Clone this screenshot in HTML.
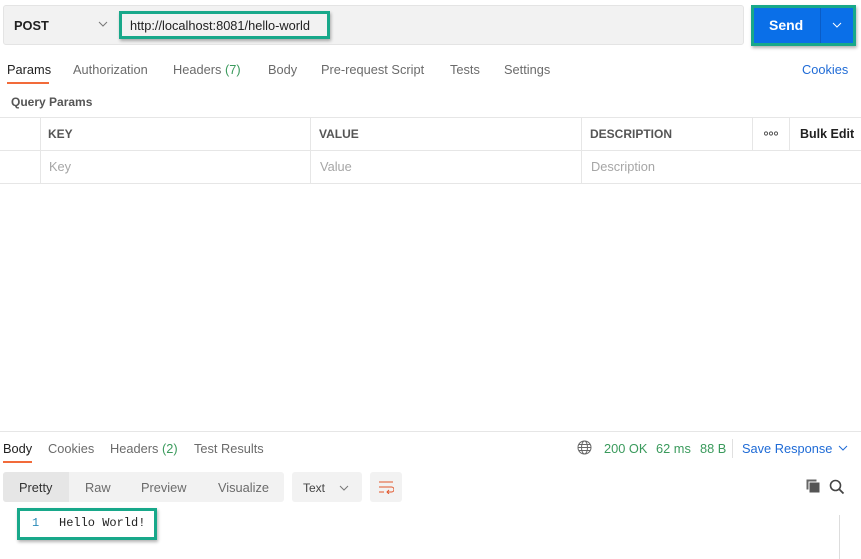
<!DOCTYPE html>
<html><head><meta charset="utf-8"><style>
*{box-sizing:border-box;margin:0;padding:0}
body{width:861px;height:559px;background:#fff;font-family:"Liberation Sans",Arial,sans-serif;font-size:12.8px;color:#212121;position:relative;overflow:hidden}
.a{position:absolute;white-space:nowrap}
.tab{color:#6b6b6b;font-size:12.8px}
.cell{position:absolute;border-left:1px solid #e6e6e6}
</style></head><body>
<div class="a" style="left:3px;top:5px;width:741px;height:40px;background:#f2f2f2;border:1px solid #e4e4e4;border-radius:3px"></div>
<div class="a" style="left:14px;top:18px;font-weight:bold;font-size:12.8px">POST</div>
<svg class="a" style="left:98px;top:21px" width="10" height="6"><path d="M1 1L5 5L9 1" stroke="#777" fill="none"/></svg>
<div class="a" style="left:119px;top:11px;width:211px;height:28px;border:3px solid #18a88a;box-shadow:1px 2px 3px rgba(0,0,0,.3)"></div>
<div class="a" style="left:130px;top:18px;font-size:12.8px">http://localhost:8081/hello-world</div>
<div class="a" style="left:751px;top:5px;width:105px;height:41px;background:#18a88a;box-shadow:1px 2px 3px rgba(0,0,0,.3)"></div>
<div class="a" style="left:754px;top:8px;width:99px;height:35px;background:#0a6fe8"></div>
<div class="a" style="left:820px;top:8px;width:1px;height:35px;background:#0a5cc6"></div>
<div class="a" style="left:769px;top:17px;color:#fff;font-weight:bold;font-size:14px">Send</div>
<svg class="a" style="left:832px;top:22px" width="10" height="6"><path d="M1 1L5 5L9 1" stroke="#fff" fill="none"/></svg>

<div class="a" style="left:7px;top:62px;color:#212121">Params</div>
<div class="a" style="left:7px;top:82px;width:42px;height:2px;background:#f26b3a"></div>
<div class="a tab" style="left:73px;top:62px">Authorization</div>
<div class="a tab" style="left:173px;top:62px">Headers <span style="color:#3a9a5c">(7)</span></div>
<div class="a tab" style="left:268px;top:62px">Body</div>
<div class="a tab" style="left:321px;top:62px">Pre-request Script</div>
<div class="a tab" style="left:450px;top:62px">Tests</div>
<div class="a tab" style="left:504px;top:62px">Settings</div>
<div class="a" style="left:802px;top:62px;color:#1f6bd6">Cookies</div>
<div class="a" style="left:11px;top:95px;font-weight:bold;color:#555;font-size:12px">Query Params</div>

<div class="a" style="left:0;top:117px;width:861px;height:1px;background:#e6e6e6"></div>
<div class="a" style="left:0;top:150px;width:861px;height:1px;background:#e6e6e6"></div>
<div class="a" style="left:0;top:183px;width:861px;height:1px;background:#e6e6e6"></div>
<div class="cell" style="left:40px;top:117px;height:67px"></div>
<div class="cell" style="left:310px;top:117px;height:67px"></div>
<div class="cell" style="left:581px;top:117px;height:67px"></div>
<div class="cell" style="left:752px;top:117px;height:34px"></div>
<div class="cell" style="left:789px;top:117px;height:34px"></div>
<div class="a" style="left:48px;top:127px;font-weight:bold;color:#555;font-size:12px">KEY</div>
<div class="a" style="left:319px;top:127px;font-weight:bold;color:#555;font-size:12px">VALUE</div>
<div class="a" style="left:590px;top:127px;font-weight:bold;color:#555;font-size:12px">DESCRIPTION</div>
<svg class="a" style="left:764px;top:131px" width="14" height="5"><circle cx="2" cy="2.5" r="1.6" stroke="#555" fill="none"/><circle cx="7" cy="2.5" r="1.6" stroke="#555" fill="none"/><circle cx="12" cy="2.5" r="1.6" stroke="#555" fill="none"/></svg>
<div class="a" style="left:800px;top:127px;font-weight:bold;color:#212121;font-size:12.5px">Bulk Edit</div>
<div class="a" style="left:49px;top:159px;color:#a6a6a6">Key</div>
<div class="a" style="left:320px;top:159px;color:#a6a6a6">Value</div>
<div class="a" style="left:591px;top:159px;color:#a6a6a6">Description</div>

<div class="a" style="left:0;top:431px;width:861px;height:1px;background:#e6e6e6"></div>
<div class="a" style="left:3px;top:441px">Body</div>
<div class="a" style="left:3px;top:461px;width:29px;height:2px;background:#f26b3a"></div>
<div class="a tab" style="left:48px;top:441px">Cookies</div>
<div class="a tab" style="left:110px;top:441px">Headers <span style="color:#3a9a5c">(2)</span></div>
<div class="a tab" style="left:194px;top:441px">Test Results</div>
<svg class="a" style="left:577px;top:440px" width="15" height="15"><circle cx="7.5" cy="7.5" r="6.5" stroke="#666" fill="none"/><ellipse cx="7.5" cy="7.5" rx="3" ry="6.5" stroke="#666" fill="none"/><path d="M1 7.5H14M2 4.5H13M2 10.5H13" stroke="#666"/></svg>
<div class="a" style="left:604px;top:441px;color:#3a9a5c">200 OK</div>
<div class="a" style="left:656px;top:441px;color:#3a9a5c">62 ms</div>
<div class="a" style="left:700px;top:441px;color:#3a9a5c">88 B</div>
<div class="a" style="left:732px;top:439px;width:1px;height:19px;background:#e0e0e0"></div>
<div class="a" style="left:742px;top:441px;color:#1f6bd6">Save Response</div>
<svg class="a" style="left:838px;top:445px" width="10" height="6"><path d="M1 1L5 5L9 1" stroke="#1f6bd6" fill="none"/></svg>

<div class="a" style="left:3px;top:472px;width:281px;height:30px;background:#f2f2f2;border-radius:3px"></div>
<div class="a" style="left:3px;top:472px;width:66px;height:30px;background:#e6e6e6;border-radius:3px 0 0 3px"></div>
<div class="a" style="left:19px;top:480px;color:#333">Pretty</div>
<div class="a tab" style="left:85px;top:480px">Raw</div>
<div class="a tab" style="left:141px;top:480px">Preview</div>
<div class="a tab" style="left:218px;top:480px">Visualize</div>
<div class="a" style="left:292px;top:472px;width:70px;height:30px;background:#f2f2f2;border-radius:3px"></div>
<div class="a" style="left:303px;top:481px;color:#444;font-size:12px">Text</div>
<svg class="a" style="left:339px;top:485px" width="10" height="6"><path d="M1 1L5 5L9 1" stroke="#777" fill="none"/></svg>
<div class="a" style="left:370px;top:472px;width:32px;height:30px;background:#f2f2f2;border-radius:3px"></div>
<svg class="a" style="left:378px;top:481px" width="16" height="13"><path d="M1 1H15M1 6H13.5a2.5 2.5 0 0 1 0 5H9M11 9L9 11L11 13M1 11H6" stroke="#e2562b" fill="none"/></svg>
<svg class="a" style="left:806px;top:479px" width="15" height="15"><rect x="0.5" y="0.5" width="10" height="10" fill="#666"/><rect x="3" y="3" width="11" height="11" fill="#555" stroke="#fff"/></svg>
<svg class="a" style="left:829px;top:479px" width="16" height="16"><circle cx="6.5" cy="6.5" r="5" stroke="#444" stroke-width="1.6" fill="none"/><path d="M10 10L14.5 14.5" stroke="#444" stroke-width="1.8"/></svg>

<div class="a" style="left:17px;top:508px;width:140px;height:32px;border:3px solid #18a88a;box-shadow:1px 2px 3px rgba(0,0,0,.3)"></div>
<div class="a" style="left:32px;top:516px;font-family:'Liberation Mono',monospace;font-size:12px;color:#2a8ab8">1</div>
<div class="a" style="left:59px;top:516px;font-family:'Liberation Mono',monospace;font-size:12px;color:#222">Hello World!</div>
<div class="a" style="left:839px;top:515px;width:1px;height:44px;background:#ddd"></div>
</body></html>
